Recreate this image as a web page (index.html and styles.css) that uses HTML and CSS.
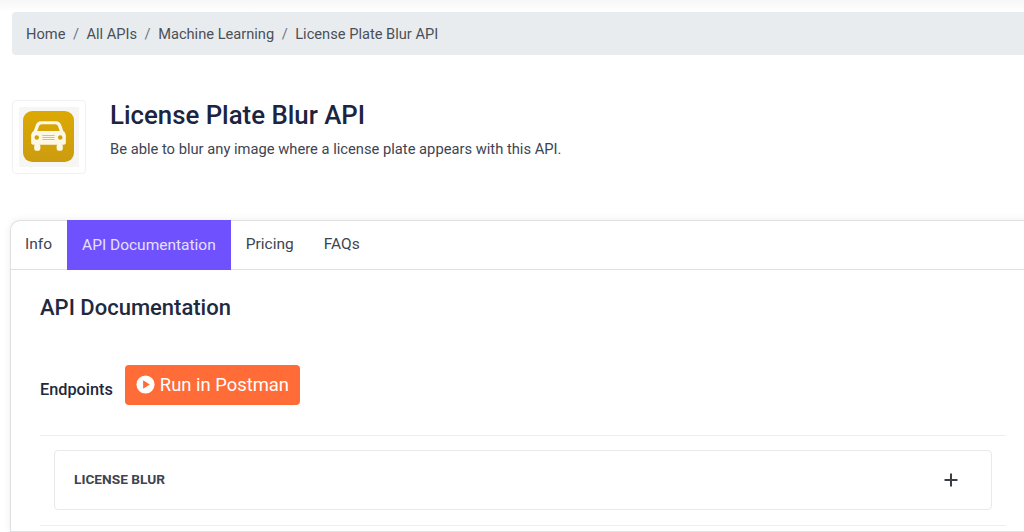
FILE: index.html
```html
<!DOCTYPE html>
<html lang="en">
<head>
<meta charset="utf-8">
<title>License Plate Blur API</title>
<link rel="stylesheet" href="styles.css">
</head>
<body>
<div class="top-shade"></div>
<main class="page">
  <nav class="crumbs">
    <a>Home</a><span class="sep">/</span><a>All APIs</a><span class="sep">/</span><a>Machine Learning</a><span class="sep">/</span><a>License Plate Blur API</a>
  </nav>
  <header class="api-head">
    <div class="logo-box">
      <div class="logo-bg">
        <svg class="logo" viewBox="0 0 50 50" width="51" height="51">
          <defs><linearGradient id="g" x1="0" y1="0" x2="0" y2="1"><stop offset="0" stop-color="#dca902"/><stop offset="1" stop-color="#cc9c10"/></linearGradient></defs>
          <rect width="50" height="50" rx="9" fill="url(#g)"/>
          <path fill-rule="evenodd" fill="#fdf8e6" d="M18 10h14c3 0 4.500 1.500 5.500 4l2 5.500c1.500 1 2.500 2.500 2.500 4.500v7c0 1.300-.7 2-2 2H10c-1.300 0-2-.7-2-2v-7c0-2 1-3.500 2.500-4.500l2-5.500c1-2.500 2.500-4 5.500-4zm.5 3c-1.500 0-2.300.7-2.900 2L14 19.500h22L34.400 15c-.6-1.300-1.400-2-2.900-2z"/>
          <circle cx="13.500" cy="26" r="2.200" fill="#d2a208"/>
          <circle cx="36.500" cy="26" r="2.200" fill="#d2a208"/>
          <path fill="#e3c25a" d="M19 23.500h12v1H19zM19 25.500h12v1H19zM19 27.500h12v1H19z"/>
          <rect x="11" y="32" width="6" height="7" rx="2.500" fill="#fdf8e6"/>
          <rect x="33" y="32" width="6" height="7" rx="2.500" fill="#fdf8e6"/>
        </svg>
      </div>
    </div>
    <div class="head-text">
      <h1>License Plate Blur API</h1>
      <p>Be able to blur any image where a license plate appears with this API.</p>
    </div>
  </header>
  <section class="card">
    <div class="tabs">
      <a class="tab">Info</a>
      <a class="tab active">API Documentation</a>
      <a class="tab">Pricing</a>
      <a class="tab">FAQs</a>
    </div>
    <div class="card-body">
      <h2>API Documentation</h2>
      <div class="endpoints">
        <span class="ep-label">Endpoints</span>
        <a class="postman">
          <svg viewBox="0 0 20 20" width="19" height="19"><circle cx="10" cy="10" r="9.500" fill="#fff"/><path d="M7.500 5.500l7 4.500-7 4.500z" fill="#ff6c37"/></svg>
          <span>Run in Postman</span>
        </a>
      </div>
      <div class="rule"></div>
      <div class="accordion">
        <span class="acc-title">LICENSE BLUR</span>
        <svg class="plus" viewBox="0 0 14 14" width="14" height="14"><path d="M7 .5v13M.5 7h13" stroke="#3a3f47" stroke-width="2" fill="none"/></svg>
      </div>
      <div class="rule"></div>
    </div>
  </section>
</main>
</body>
</html>
```
FILE: styles.css
```css
* { box-sizing: border-box; }
html, body { margin: 0; height: 532px; overflow: hidden; background: #fff; }
body { font-family: Roboto, "Liberation Sans", sans-serif; color: #1f2940; }
.top-shade { height: 10px; background: linear-gradient(#f7f7f7, #fdfdfd); }
.page { padding: 2px 0 0 12px; width: 1060px; height: 522px; overflow: hidden; }
.crumbs {
  height: 43px; background: #e9ecef; border-radius: 4px;
  display: flex; align-items: center; padding: 1px 14px 0; font-size: 14.650px; color: #495057;
}
.sep { margin: 0 7.500px; color: #6c757d; }
.api-head { display: flex; margin-top: 45px; align-items: flex-start; }
.logo-box {
  width: 74px; height: 74px; border: 1px solid #f1f1f3; border-radius: 4px;
  display: flex; align-items: center; justify-content: center; flex: none;
}
.logo-bg { width: 60px; height: 60px; background: #f6f6f4; display: flex; align-items: center; justify-content: center; }
.logo { display: block; margin: 0 1px 1px 0; }
.head-text { margin-left: 24px; }
h1 { margin: 0; font-size: 25.800px; font-weight: 500; line-height: 30px; color: #1b2440; }
.head-text p { margin: 9px 0 0; font-size: 14.730px; line-height: 20px; color: #3d4452; }
.card {
  margin: 46px 0 0 -2px; border: 1px solid #dfe0e2; border-right: 0; border-radius: 10px 0 0 0;
  box-shadow: 0 0 8px rgba(0,0,0,.07); height: 312px; background: #fff;
}
.tabs { display: flex; height: 49px; border-bottom: 1px solid #dee2e6; }
.tab { display: flex; align-items: center; padding: 0 15px 2px; font-size: 15.500px; color: #3d4452; }
.tab:first-child { padding-left: 14px; }
.tab.active { background: #6f52fd; color: #e6e0ff; margin: -1px 0 -1px; padding-bottom: 1px; }
.card-body { padding: 0 18px 0 29px; width: 1013px; }
h2 { margin: 0; padding-top: 25px; font-size: 22px; font-weight: 500; line-height: 26px; color: #1f2940; }
.endpoints { display: flex; align-items: center; margin-top: 44px; height: 40px; }
.ep-label { font-size: 16.300px; font-weight: 500; margin-top: 8px; color: #1f2940; }
.postman {
  margin-left: 12px; height: 40px; width: 175px; background: #ff6c37; border-radius: 4px;
  display: flex; align-items: center; padding-left: 11px; gap: 5px; color: #fff; font-size: 18.400px; padding-bottom: 2px;
}
.rule { height: 1px; background: #eeeeee; margin-top: 30px; }
.accordion {
  margin: 14px 14px 0; height: 60px; border: 1px solid #e9e9ea; border-radius: 4px;
  display: flex; align-items: center; justify-content: space-between; padding: 0 33px 2px 19px;
}
.acc-title { font-size: 13.700px; font-weight: 700; color: #3d4452; }
.plus { display: block; margin-top: 2px; }
.accordion + .rule { margin-top: 15px; }
```
